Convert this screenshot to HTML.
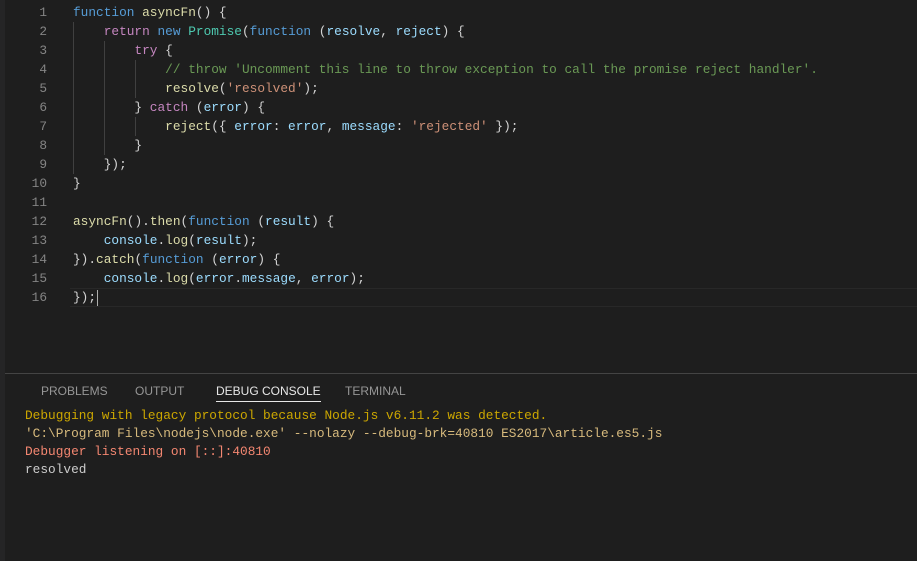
<!DOCTYPE html><html><head><style>
body{margin:0;width:917px;height:561px;background:#1e1e1e;overflow:hidden;position:relative;font-family:"Liberation Mono",monospace}
.strip{position:absolute;left:0;top:0;width:5px;height:561px;background:#252526}
.code{position:absolute;left:0;top:3px;font-size:12.8px;line-height:19px;color:#d4d4d4;white-space:pre}
.ln{position:absolute;left:0;width:47px;text-align:right;color:#858585}
.tx{position:absolute;left:73px}
.k{color:#569cd6}.c{color:#c586c0}.t{color:#4ec9b0}.v{color:#9cdcfe}.f{color:#dcdcaa}.s{color:#ce9178}.cm{color:#6a9955}
.g{position:absolute;width:1px;background:#404040}
.cur{position:absolute;left:70px;right:0;top:288px;height:17px;border-top:1px solid #282828;border-bottom:1px solid #282828}
.panel{position:absolute;left:5px;right:0;top:373px;bottom:0;border-top:1px solid #444}
.tab{position:absolute;top:10px;font-family:"Liberation Sans",sans-serif;font-size:12px;color:#969696}
.con{position:absolute;left:25px;top:407px;font-size:12.8px;line-height:18px;white-space:pre}
</style></head><body>
<div class="strip"></div>
<div class="cur"></div>
<div class="g" style="left:73px;top:22px;height:152px"></div>
<div class="g" style="left:104px;top:41px;height:114px"></div>
<div class="g" style="left:135px;top:60px;height:38px"></div>
<div class="g" style="left:135px;top:117px;height:19px"></div>
<div style="position:absolute;left:97px;top:290px;width:1px;height:16px;background:#aeafad"></div>
<div class="code">
<div class="ln" style="top:0">1</div><div class="tx" style="top:0"><span class="k">function</span> <span class="f">asyncFn</span>() {</div>
<div class="ln" style="top:19px">2</div><div class="tx" style="top:19px">    <span class="c">return</span> <span class="k">new</span> <span class="t">Promise</span>(<span class="k">function</span> (<span class="v">resolve</span>, <span class="v">reject</span>) {</div>
<div class="ln" style="top:38px">3</div><div class="tx" style="top:38px">        <span class="c">try</span> {</div>
<div class="ln" style="top:57px">4</div><div class="tx" style="top:57px">            <span class="cm">// throw 'Uncomment this line to throw exception to call the promise reject handler'.</span></div>
<div class="ln" style="top:76px">5</div><div class="tx" style="top:76px">            <span class="f">resolve</span>(<span class="s">'resolved'</span>);</div>
<div class="ln" style="top:95px">6</div><div class="tx" style="top:95px">        } <span class="c">catch</span> (<span class="v">error</span>) {</div>
<div class="ln" style="top:114px">7</div><div class="tx" style="top:114px">            <span class="f">reject</span>({ <span class="v">error</span>: <span class="v">error</span>, <span class="v">message</span>: <span class="s">'rejected'</span> });</div>
<div class="ln" style="top:133px">8</div><div class="tx" style="top:133px">        }</div>
<div class="ln" style="top:152px">9</div><div class="tx" style="top:152px">    });</div>
<div class="ln" style="top:171px">10</div><div class="tx" style="top:171px">}</div>
<div class="ln" style="top:190px">11</div>
<div class="ln" style="top:209px">12</div><div class="tx" style="top:209px"><span class="f">asyncFn</span>().<span class="f">then</span>(<span class="k">function</span> (<span class="v">result</span>) {</div>
<div class="ln" style="top:228px">13</div><div class="tx" style="top:228px">    <span class="v">console</span>.<span class="f">log</span>(<span class="v">result</span>);</div>
<div class="ln" style="top:247px">14</div><div class="tx" style="top:247px">}).<span class="f">catch</span>(<span class="k">function</span> (<span class="v">error</span>) {</div>
<div class="ln" style="top:266px">15</div><div class="tx" style="top:266px">    <span class="v">console</span>.<span class="f">log</span>(<span class="v">error</span>.<span class="v">message</span>, <span class="v">error</span>);</div>
<div class="ln" style="top:285px">16</div><div class="tx" style="top:285px">});</div>
</div>
<div class="panel">
<div class="tab" style="left:36px">PROBLEMS</div>
<div class="tab" style="left:130px">OUTPUT</div>
<div class="tab" style="left:211px;color:#e7e7e7;border-bottom:1px solid #e7e7e7;padding-bottom:3px">DEBUG CONSOLE</div>
<div class="tab" style="left:340px">TERMINAL</div>
</div>
<div class="con"><span style="color:#cca700">Debugging with legacy protocol because Node.js v6.11.2 was detected.</span>
<span style="color:#d7ba7d">'C:\Program Files\nodejs\node.exe' --nolazy --debug-brk=40810 ES2017\article.es5.js</span>
<span style="color:#f48771">Debugger listening on [::]:40810</span>
<span style="color:#cccccc">resolved</span></div>
</body></html>
